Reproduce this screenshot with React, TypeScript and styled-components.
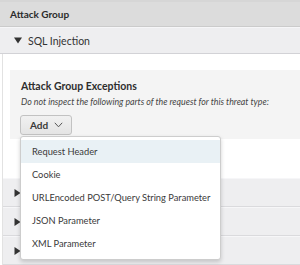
import React from "react";
import styled, { createGlobalStyle } from "styled-components";

const Global = createGlobalStyle`
  html, body { margin: 0; padding: 0; background: #ffffff; }
  body { font-family: Lato, "Open Sans", sans-serif; color: #333333; }
  * { box-sizing: border-box; }
`;

const Page = styled.div`
  width: 300px;
  height: 265px;
  overflow: hidden;
  position: relative;
`;

const Header = styled.div`
  height: 27px;
  background: #dcdcdc;
  border-top: 2px solid #d6d6d6;
  border-bottom: 1px solid #cbcbcb;
  display: flex;
  align-items: center;
  padding-left: 10px;
  font-weight: 700;
  font-size: 10px;
  color: #2b2b2b;
`;

const GroupRow = styled.div<{ $open?: boolean }>`
  height: ${(p) => (p.$open ? 27 : 29)}px;
  background: #eeeef0;
  border-top: 1px solid #f6f6f8;
  border-bottom: 1px solid ${(p) => (p.$open ? "#d2d2d6" : "#dadadd")};
  display: flex;
  align-items: center;
  padding-left: ${(p) => (p.$open ? 14 : 11)}px;
  gap: 6px;
  font-size: 10.5px;
  color: #333;
`;

const Tri = styled.svg`
  flex: none;
`;

const Body = styled.div`
  margin-left: 2px;
  border-left: 1px solid #e2e2e2;
`;

const Content = styled.div`
  padding: 16px 0 39px 7px;
`;

const Panel = styled.div`
  background: #f4f4f4;
  height: 69px;
  padding: 10px 0 0 11px;
  position: relative;
`;

const Title = styled.div`
  font-weight: 700;
  font-size: 10.5px;
  line-height: 13px;
  color: #2e2e2e;
`;

const Hint = styled.div`
  font-style: italic;
  font-size: 8.8px;
  line-height: 11px;
  margin-top: 3px;
  color: #444;
  white-space: nowrap;
`;

const AddWrap = styled.div`
  position: relative;
  margin-top: 8px;
`;

const AddButton = styled.button`
  width: 52px;
  height: 20px;
  margin-left: -1px;
  border: 1px solid #c2c2c2;
  border-radius: 3px;
  background: linear-gradient(#f1f1f1, #e4e4e4);
  display: flex;
  align-items: center;
  padding: 0 0 0 9px;
  gap: 6px;
  font-family: inherit;
  font-weight: 700;
  font-size: 10px;
  color: #3a3a3a;
`;

const Menu = styled.div`
  position: absolute;
  top: 21px;
  left: -1px;
  width: 201px;
  background: #ffffff;
  border: 1px solid #cdcdcd;
  border-radius: 3px;
  box-shadow: 0 2px 4px rgba(0, 0, 0, 0.18);
  padding: 3px 0 4px;
  z-index: 5;
`;

const Item = styled.div<{ $active?: boolean }>`
  height: 23px;
  display: flex;
  align-items: center;
  padding-left: 11px;
  font-size: 9.3px;
  white-space: nowrap;
  color: #3a3a3a;
  background: ${(p) => (p.$active ? "#e9f1f5" : "transparent")};
`;

const TriDown = () => (
  <Tri width="8" height="7" viewBox="0 0 8 7">
    <path d="M0 0.5 H8 L4 6.5 Z" fill="#333" />
  </Tri>
);

const TriRight = () => (
  <Tri width="7" height="8" viewBox="0 0 7 8">
    <path d="M0.5 0 V8 L6.5 4 Z" fill="#333" />
  </Tri>
);

const Chevron = () => (
  <svg width="9" height="6" viewBox="0 0 9 6">
    <path d="M0.8 0.8 L4.5 4.8 L8.2 0.8" fill="none" stroke="#555" strokeWidth="1" />
  </svg>
);

const items = [
  "Request Header",
  "Cookie",
  "URLEncoded POST/Query String Parameter",
  "JSON Parameter",
  "XML Parameter",
];

export default function App() {
  return (
    <Page>
      <Global />
      <Header>Attack Group</Header>
      <GroupRow $open>
        <TriDown />
        SQL Injection
      </GroupRow>
      <Body>
        <Content>
          <Panel>
            <Title>Attack Group Exceptions</Title>
            <Hint>Do not inspect the following parts of the request for this threat type:</Hint>
            <AddWrap>
              <AddButton>
                Add
                <Chevron />
              </AddButton>
              <Menu>
                {items.map((t, i) => (
                  <Item key={t} $active={i === 0}>
                    {t}
                  </Item>
                ))}
              </Menu>
            </AddWrap>
          </Panel>
        </Content>
        <GroupRow>
          <TriRight />
        </GroupRow>
        <GroupRow>
          <TriRight />
        </GroupRow>
        <GroupRow>
          <TriRight />
        </GroupRow>
      </Body>
    </Page>
  );
}
